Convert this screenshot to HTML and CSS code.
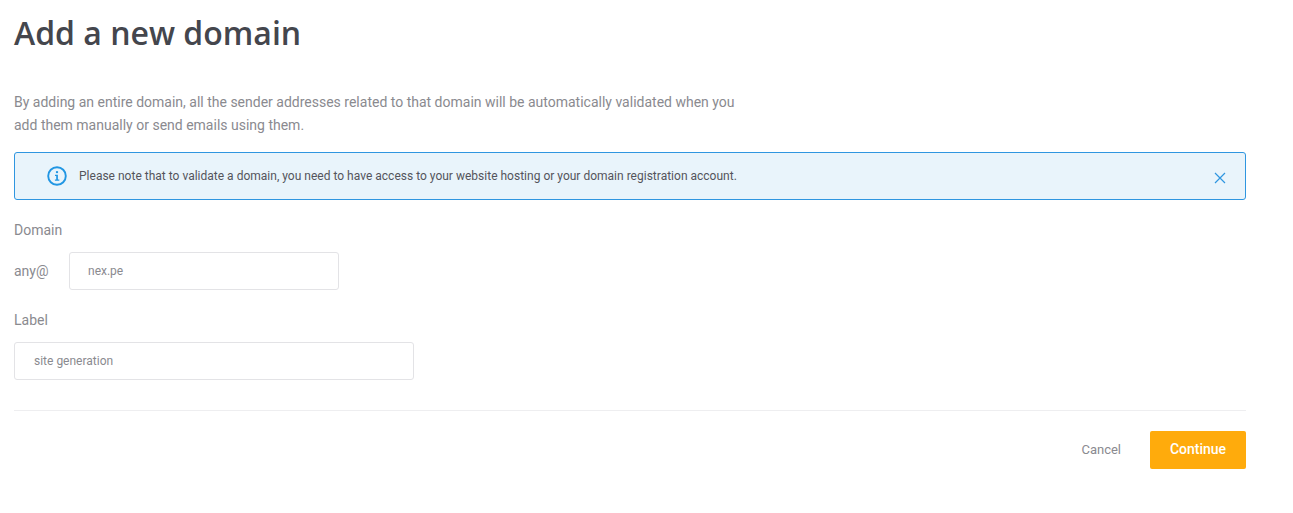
FILE: index.html
```html
<!DOCTYPE html>
<html lang="en">
<head>
<meta charset="utf-8">
<title>Add a new domain</title>
<link rel="stylesheet" href="styles.css">
</head>
<body>
<main class="page">
  <h1 class="title">Add a new domain</h1>
  <p class="intro">By adding an entire domain, all the sender addresses related to that domain will be automatically validated when you add them manually or send emails using them.</p>
  <div class="notice">
    <svg class="notice-icon" width="20" height="20" viewBox="0 0 20 20" fill="none">
      <circle cx="10" cy="10" r="8.8" stroke="#2196e3" stroke-width="1.9"/>
      <circle cx="10" cy="6.1" r="1.2" fill="#2196e3"/>
      <path d="M8 8.8h2.9v4.6H12.3v1.3H7.9v-1.3h1.3V10.1H8z" fill="#2196e3"/>
    </svg>
    <span class="notice-text">Please note that to validate a domain, you need to have access to your website hosting or your domain registration account.</span>
    <svg class="notice-close" width="12" height="12" viewBox="0 0 12 12" fill="none">
      <path d="M1 1l10 10M11 1L1 11" stroke="#2f96e0" stroke-width="1.2"/>
    </svg>
  </div>
  <div class="field-label">Domain</div>
  <div class="domain-row">
    <span class="prefix">any@</span>
    <div class="input input-short">nex.pe</div>
  </div>
  <div class="field-label label-second">Label</div>
  <div class="input input-long">site generation</div>
  <div class="divider"></div>
  <div class="actions">
    <span class="cancel">Cancel</span>
    <span class="continue">Continue</span>
  </div>
</main>
</body>
</html>
```
FILE: styles.css
```css
html, body {
  margin: 0;
  padding: 0;
  background: #fff;
}
.page {
  width: 1232px;
  padding: 0 0 0 14px;
  font-family: Roboto, "Liberation Sans", sans-serif;
  color: #8a8a8f;
}
.title {
  margin: 0;
  padding-top: 11px;
  font-family: "Open Sans", sans-serif;
  font-size: 32px;
  line-height: 43px;
  font-weight: 600;
  color: #44464d;
}
.intro {
  margin: 37px 0 0;
  width: 730px;
  font-size: 14px;
  line-height: 23px;
}
.notice {
  box-sizing: border-box;
  height: 48px;
  margin-top: 15px;
  display: flex;
  align-items: center;
  padding: 0 19px 0 32px;
  border: 1px solid #2f96e0;
  border-radius: 3px;
  background: #e9f4fb;
}
.notice-icon {
  flex: none;
}
.notice-text {
  flex: 1;
  margin: 0 0 1px 12px;
  font-size: 12px;
  letter-spacing: 0.008px;
  color: #54545c;
}
.notice-close {
  flex: none;
  margin-top: 4px;
}
.field-label {
  margin-top: 21px;
  font-size: 14px;
  line-height: 18px;
}
.label-second {
  margin-top: 21px;
}
.domain-row {
  display: flex;
  align-items: center;
  margin-top: 13px;
}
.prefix {
  width: 55px;
  font-size: 14px;
}
.input {
  box-sizing: border-box;
  height: 38px;
  display: flex;
  align-items: center;
  padding-left: 19px;
  border: 1px solid #e3e3e6;
  border-radius: 3px;
  font-size: 12px;
  background: #fff;
}
.input-short {
  width: 270px;
  padding-left: 18px;
}
.input-long {
  width: 400px;
  margin-top: 13px;
}
.divider {
  height: 1px;
  margin-top: 30px;
  background: #eeeef0;
}
.actions {
  display: flex;
  justify-content: flex-end;
  align-items: center;
  margin-top: 20px;
}
.cancel {
  font-size: 13px;
  margin-right: 29px;
  margin-bottom: 2px;
}
.continue {
  box-sizing: border-box;
  width: 96px;
  height: 38px;
  padding-bottom: 2px;
  display: flex;
  align-items: center;
  justify-content: center;
  border-radius: 2px;
  background: #ffab0c;
  color: #fff;
  font-size: 14px;
  font-weight: 500;
}
```
